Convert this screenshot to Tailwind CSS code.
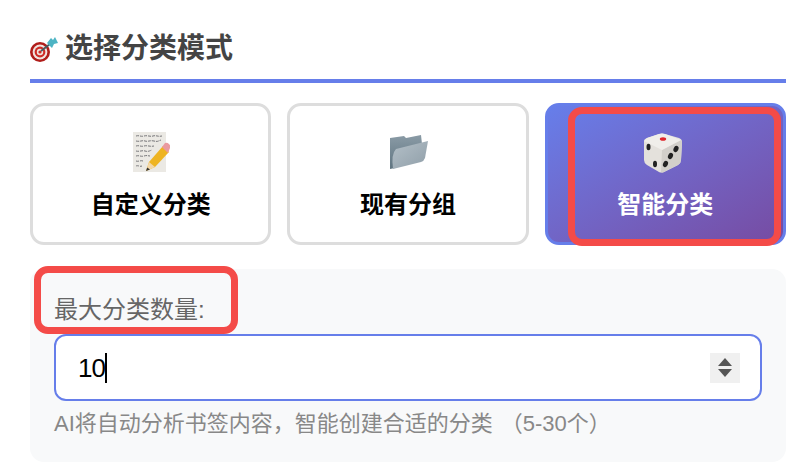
<!doctype html>
<html lang="zh-CN">

<head>
    <meta charset="UTF-8">
    <meta name="viewport" content="width=device-width, initial-scale=1.0">
    <script src="https://cdn.jsdelivr.net/npm/@tailwindcss/browser@4"></script>
    <title>选择分类模式</title>
</head>

<body class="bg-white font-['Liberation_Sans','Noto_Sans_CJK_SC',sans-serif] overflow-hidden">
    <div class="relative w-[812px] h-[468px] pl-[30px] pr-[26px] pt-[30px]">
        <!-- Title -->
        <div class="flex items-center h-[36px] gap-[7px]">
            <svg class="w-[28px] h-[28px]" viewBox="0 0 28 28">
                <circle cx="10" cy="18" r="10" fill="#b01d1a" />
                <circle cx="10" cy="18" r="7.4" fill="#f0e4e0" />
                <circle cx="10" cy="18" r="5.4" fill="#cf2c26" />
                <circle cx="10" cy="18" r="3.2" fill="#f0e4e0" />
                <circle cx="10" cy="18" r="1.6" fill="#cf2c26" />
                <path d="M11 17 L20 10" stroke="#4a5a60" stroke-width="2" />
                <path d="M17 9 L21 4 L23 6 L25 3 L27 7 L28 9 L24 10 L22 14 Z" fill="#4db4c4" />
            </svg>
            <h2 class="text-[28px] leading-[36px] font-bold text-[#444] translate-y-[1px]">选择分类模式</h2>
        </div>
        <div class="h-[4px] bg-[#667eea] mt-[13px]"></div>

        <!-- Mode cards -->
        <div class="grid grid-cols-3 gap-[16px] mt-[20px]">
            <div class="h-[142px] border-[3px] border-[#ddd] rounded-[14px] bg-white flex flex-col items-center pt-[26px]">
                <svg class="w-[38px] h-[42px]" viewBox="0 0 38 42">
                    <rect x="1" y="0" width="33" height="40" fill="#ebe9e4" />
                    <path d="M4 4c3-1 5 1 8 0s6 1 9 0 5 1 9 0M4 9c4 1 6-1 9 0s5-1 9 0 4 0 7-1M4 14c3-1 5 1 8 0s6 1 10 0M4 19c3 1 6-1 9 0s4 0 7-1M4 24c3-1 5 1 8 0s4 0 6 0M4 29c2 1 5-1 7 0M4 34c2-1 4 1 6 0" fill="none" stroke="#77777a" stroke-width="1" stroke-dasharray="3 1" />
                    <path d="M14 39 L17 30 L31 14 L37 20 L23 35 Z" fill="#eeb422" />
                    <path d="M14 39 L17 30 L23 35 Z" fill="#f3d7a8" />
                    <path d="M14 39 L15.2 35.5 L18 37.5 Z" fill="#333" />
                    <path d="M30 15 L33 11 Q35 10 37 12 Q39 14 38 16 L36 21 Z" fill="#ea9aa0" />
                </svg>
                <span class="mt-[15px] text-[24px] leading-[32px] font-bold text-black">自定义分类</span>
            </div>
            <div class="h-[142px] border-[3px] border-[#ddd] rounded-[14px] bg-white flex flex-col items-center pt-[26px]">
                <svg class="w-[42px] h-[42px]" viewBox="0 0 42 42">
                    <defs>
                        <linearGradient id="folderBack" x1="0" y1="0" x2="0" y2="1">
                            <stop offset="0" stop-color="#8a9ba6" />
                            <stop offset="1" stop-color="#5f7480" />
                        </linearGradient>
                        <linearGradient id="folderFront" x1="0" y1="0" x2="1" y2="1">
                            <stop offset="0" stop-color="#b4c0c8" />
                            <stop offset="1" stop-color="#8f9ea8" />
                        </linearGradient>
                    </defs>
                    <path d="M3 6 L17 4 L19 6 L34 3 L35 12 L8 36 L3 37 Z" fill="url(#folderBack)" />
                    <path d="M6 37 Q4 22 9 17 L41 9 L38 26 Q37 29 34 30 Z" fill="url(#folderFront)" />
                </svg>
                <span class="mt-[15px] text-[24px] leading-[32px] font-bold text-black">现有分组</span>
            </div>
            <div class="h-[142px] border-[3px] border-[#667eea] rounded-[14px] bg-linear-to-br from-[#667eea] to-[#764ba2] flex flex-col items-center pt-[26px]">
                <svg class="w-[42px] h-[42px] -translate-x-[3px]" viewBox="0 0 42 42">
                    <path d="M3 9 Q3 7 6 6 L18 2 Q21 1 24 2 L38 6 Q41 7 41 10 L40 28 Q40 31 37 33 L23 40 Q20 41 18 40 L6 33 Q3 31 3 28 Z" fill="#e4e1dc" />
                    <path d="M21 18 L40 8 Q41 9 41 10 L40 28 Q40 31 37 33 L23 40 Q21 41 20 40 Z" fill="#d2cfca" />
                    <path d="M3 9 L21 18 L40 8 L24 2 Q21 1 18 2 L6 6 Z" fill="#f0eeea" />
                    <ellipse cx="22" cy="7" rx="3.2" ry="1.8" fill="#e0262b" />
                    <ellipse cx="7.5" cy="15" rx="2" ry="3.2" fill="#222" />
                    <ellipse cx="14" cy="32" rx="2" ry="3.2" fill="#222" />
                    <ellipse cx="35" cy="17" rx="2.4" ry="3.2" fill="#222" transform="rotate(25 35 17)" />
                    <ellipse cx="29.5" cy="24" rx="2.4" ry="3.2" fill="#222" transform="rotate(25 29.5 24)" />
                    <ellipse cx="24.5" cy="32" rx="2.4" ry="3.2" fill="#222" transform="rotate(25 24.5 32)" />
                </svg>
                <span class="mt-[15px] text-[24px] leading-[32px] font-bold text-white">智能分类</span>
            </div>
        </div>

        <!-- Max categories panel -->
        <div class="mt-[24px] h-[193px] bg-[#f8f9fa] rounded-[14px] pl-[24px] pr-[24px] pt-[26px]">
            <label class="block text-[24px] leading-[30px] text-[#666]">最大分类数量:</label>
            <div class="mt-[9px] h-[67px] bg-white border-2 border-[#667eea] rounded-[12px] flex items-center justify-between pl-[22px] pr-[20px]">
                <div class="flex items-center">
                    <span class="text-[26px] leading-[32px] tracking-[-1px] text-black">10</span>
                    <span class="w-[2px] h-[30px] bg-black"></span>
                </div>
                <div class="w-[30px] h-[30px] bg-[#f0f0f0] flex flex-col items-center justify-center gap-[3px]">
                    <div class="w-0 h-0 border-x-[7px] border-x-transparent border-b-[8px] border-b-[#555]"></div>
                    <div class="w-0 h-0 border-x-[7px] border-x-transparent border-t-[8px] border-t-[#555]"></div>
                </div>
            </div>
            <p class="mt-[8px] text-[22px] leading-[30px] text-[#888]">AI将自动分析书签内容，智能创建合适的分类<span class="ml-[8px]">（5-30个）</span></p>
        </div>

        <!-- Red annotation boxes -->
        <div class="absolute left-[568px] top-[107px] w-[213px] h-[139px] border-[7px] border-[#f44b48] rounded-[14px]"></div>
        <div class="absolute left-[34px] top-[266px] w-[204px] h-[68px] border-[7px] border-[#f44b48] rounded-[14px]"></div>
    </div>
</body>

</html>
